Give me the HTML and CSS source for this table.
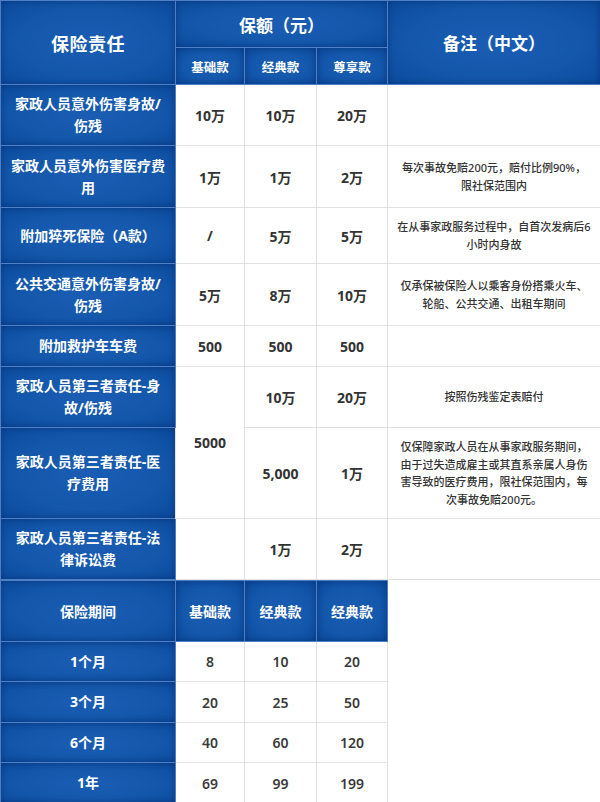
FILE: index.html
```html
<!DOCTYPE html>
<html lang="zh-CN">
<head>
<meta charset="utf-8">
<title>保险责任</title>
<link rel="stylesheet" href="styles.css">
</head>
<body>
<table class="tbl main">
  <colgroup>
    <col class="c1"><col class="c2"><col class="c3"><col class="c4"><col class="c5">
  </colgroup>
  <tr class="h47">
    <th rowspan="2" class="big">保险责任</th>
    <th colspan="3" class="mid">保额（元）</th>
    <th rowspan="2" class="mid">备注（中文）</th>
  </tr>
  <tr class="h37">
    <th class="sub">基础款</th>
    <th class="sub">经典款</th>
    <th class="sub">尊享款</th>
  </tr>
  <tr class="h61">
    <th class="lbl">家政人员意外伤害身故/<br>伤残</th>
    <td class="val">10万</td><td class="val">10万</td><td class="val">20万</td>
    <td class="note"></td>
  </tr>
  <tr class="h62">
    <th class="lbl">家政人员意外伤害医疗费<br>用</th>
    <td class="val">1万</td><td class="val">1万</td><td class="val">2万</td>
    <td class="note">每次事故免赔200元，赔付比例90%，<br>限社保范围内</td>
  </tr>
  <tr class="h56">
    <th class="lbl">附加猝死保险（A款）</th>
    <td class="val">/</td><td class="val">5万</td><td class="val">5万</td>
    <td class="note">在从事家政服务过程中，自首次发病后6<br>小时内身故</td>
  </tr>
  <tr class="h62">
    <th class="lbl">公共交通意外伤害身故/<br>伤残</th>
    <td class="val">5万</td><td class="val">8万</td><td class="val">10万</td>
    <td class="note">仅承保被保险人以乘客身份搭乘火车、<br>轮船、公共交通、出租车期间</td>
  </tr>
  <tr class="h41">
    <th class="lbl">附加救护车车费</th>
    <td class="val">500</td><td class="val">500</td><td class="val">500</td>
    <td class="note"></td>
  </tr>
  <tr class="h61">
    <th class="lbl">家政人员第三者责任-身<br>故/伤残</th>
    <td class="val" rowspan="2">5000</td>
    <td class="val">10万</td><td class="val">20万</td>
    <td class="note">按照伤残鉴定表赔付</td>
  </tr>
  <tr class="h91">
    <th class="lbl">家政人员第三者责任-医<br>疗费用</th>
    <td class="val">5,000</td><td class="val">1万</td>
    <td class="note">仅保障家政人员在从事家政服务期间，<br>由于过失造成雇主或其直系亲属人身伤<br>害导致的医疗费用，限社保范围内，每<br>次事故免赔200元。</td>
  </tr>
  <tr class="h61">
    <th class="lbl">家政人员第三者责任-法<br>律诉讼费</th>
    <td class="val"></td><td class="val">1万</td><td class="val">2万</td>
    <td class="note"></td>
  </tr>
</table>
<table class="tbl period">
  <colgroup>
    <col class="c1"><col class="c2"><col class="c3"><col class="c4">
  </colgroup>
  <tr class="h61">
    <th class="sub2">保险期间</th>
    <th class="sub2">基础款</th>
    <th class="sub2">经典款</th>
    <th class="sub2">经典款</th>
  </tr>
  <tr class="h40">
    <th class="lbl">1个月</th>
    <td class="val light">8</td><td class="val light">10</td><td class="val light">20</td>
  </tr>
  <tr class="h41">
    <th class="lbl">3个月</th>
    <td class="val light">20</td><td class="val light">25</td><td class="val light">50</td>
  </tr>
  <tr class="h40">
    <th class="lbl">6个月</th>
    <td class="val light">40</td><td class="val light">60</td><td class="val light">120</td>
  </tr>
  <tr class="h41">
    <th class="lbl">1年</th>
    <td class="val light">69</td><td class="val light">99</td><td class="val light">199</td>
  </tr>
</table>
</body>
</html>
```

FILE: styles.css
```css
html, body {
  margin: 0;
  padding: 0;
  background: #ffffff;
}
body {
  width: 600px;
  font-family: "Noto Sans", "Noto Sans CJK SC", sans-serif;
  color: #333333;
}
.tbl {
  border-collapse: collapse;
  table-layout: fixed;
}
.main {
  width: 600px;
}
.period {
  width: 387px;
}
.c1 { width: 175px; }
.c2 { width: 69px; }
.c3 { width: 72px; }
.c4 { width: 71px; }
.c5 { width: 213px; }

.h37 { height: 37px; }
.h40 { height: 40px; }
.h41 { height: 41px; }
.h47 { height: 47px; }
.h56 { height: 56px; }
.h61 { height: 61px; }
.h62 { height: 62px; }
.h91 { height: 91px; }

.tbl th,
.tbl td {
  padding: 0 4px;
  text-align: center;
  vertical-align: middle;
  overflow: hidden;
}
.tbl td {
  border: 1px solid #e2e2e2;
  background: #ffffff;
}
.tbl th {
  border: 1px solid #4f80c6;
  color: #ffffff;
  font-family: "Noto Sans", "Noto Sans CJK SC", sans-serif;
  font-weight: 700;
  background: radial-gradient(ellipse at center, #1a5db3 0%, #1458ac 55%, #0b4a9c 100%);
  box-shadow: inset 0 0 6px rgba(0, 30, 90, 0.45);
}
.big {
  font-size: 18px;
  letter-spacing: 0.5px;
}
.mid {
  font-size: 17px;
}
.sub {
  font-size: 12.5px;
}
.sub2 {
  font-size: 14px;
}
.lbl {
  font-size: 14px;
  line-height: 22px;
  white-space: nowrap;
}
.val {
  font-size: 14px;
  font-weight: 700;
  color: #333333;
}
.val.light {
  font-weight: 600;
  color: #3a3a3a;
}
.note {
  font-size: 11px;
  line-height: 17.5px;
  color: #333333;
  white-space: nowrap;
  font-weight: 500;
}
```
